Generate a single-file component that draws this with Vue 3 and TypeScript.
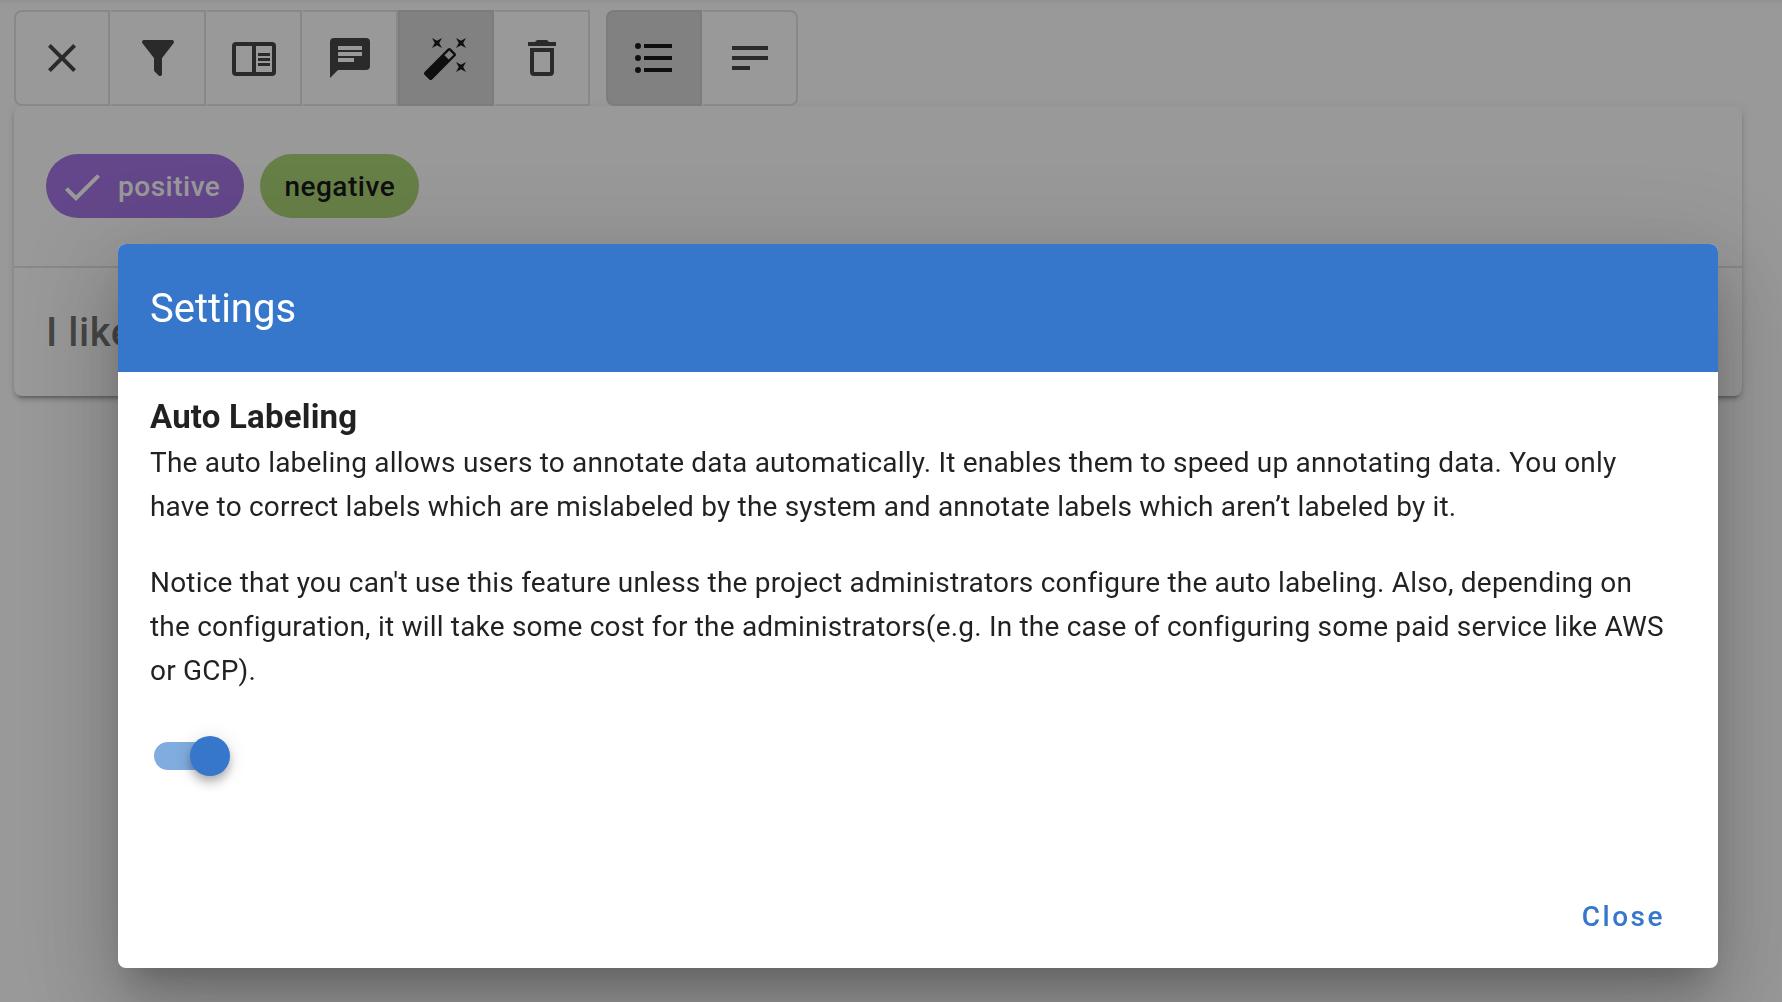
<script setup lang="ts">
import { ref } from 'vue'

interface Tool {
  name: string
  path: string
}

const tools: Tool[] = [
  {
    name: 'Clear labels',
    path: 'M19 6.41L17.59 5 12 10.59 6.41 5 5 6.41 10.59 12 5 17.59 6.41 19 12 13.41 17.59 19 19 17.59 13.41 12z',
  },
  {
    name: 'Filter',
    path: 'M14,12V19.88C14.04,20.18 13.94,20.5 13.71,20.71C13.32,21.1 12.69,21.1 12.3,20.71L10.29,18.7C10.06,18.47 9.96,18.16 10,17.87V12H9.97L4.21,4.62C3.87,4.19 3.95,3.56 4.38,3.22C4.57,3.08 4.78,3 5,3H19C19.22,3 19.43,3.08 19.62,3.22C20.05,3.56 20.13,4.19 19.79,4.62L14.03,12H14Z',
  },
  {
    name: 'Guideline',
    path: 'M21,4H3A2,2 0 0,0 1,6V19A2,2 0 0,0 3,21H21A2,2 0 0,0 23,19V6A2,2 0 0,0 21,4M3,19V6H11V19H3M21,19H13V6H21V19M14,9.5H20V11H14V9.5M14,12H20V13.5H14V12M14,14.5H20V16H14V14.5Z',
  },
  {
    name: 'Comments',
    path: 'M20,2H4A2,2 0 0,0 2,4V22L6,18H20A2,2 0 0,0 22,16V4A2,2 0 0,0 20,2M6,6H18V8H6V6M6,9H18V11H6V9M14,14H6V12H14V14Z',
  },
  {
    name: 'Auto labeling',
    path: 'M7.5,5.6L5,7L6.4,4.5L5,2L7.5,3.4L10,2L8.6,4.5L10,7L7.5,5.6M19.5,15.4L22,14L20.6,16.5L22,19L19.5,17.6L17,19L18.4,16.5L17,14L19.5,15.4M22,2L20.6,4.5L22,7L19.5,5.6L17,7L18.4,4.5L17,2L19.5,3.4L22,2M13.34,12.78L15.78,10.34L13.66,8.22L11.22,10.66L13.34,12.78M14.37,7.29L16.71,9.63C17.1,10 17.1,10.65 16.71,11.04L5.04,22.71C4.65,23.1 4,23.1 3.63,22.71L1.29,20.37C0.9,20 0.9,19.35 1.29,18.96L12.96,7.29C13.35,6.9 14,6.9 14.37,7.29Z',
  },
  {
    name: 'Delete',
    path: 'M6,19A2,2 0 0,0 8,21H16A2,2 0 0,0 18,19V7H6V19M8,9H16V19H8V9M15.5,4L14.5,3H9.5L8.5,4H5V6H19V4H15.5Z',
  },
]

const views: Tool[] = [
  {
    name: 'Label list',
    path: 'M7,5H21V7H7V5M7,13V11H21V13H7M4,4.5A1.5,1.5 0 0,1 5.5,6A1.5,1.5 0 0,1 4,7.5A1.5,1.5 0 0,1 2.5,6A1.5,1.5 0 0,1 4,4.5M4,10.5A1.5,1.5 0 0,1 5.5,12A1.5,1.5 0 0,1 4,13.5A1.5,1.5 0 0,1 2.5,12A1.5,1.5 0 0,1 4,10.5M7,19V17H21V19H7M4,16.5A1.5,1.5 0 0,1 5.5,18A1.5,1.5 0 0,1 4,19.5A1.5,1.5 0 0,1 2.5,18A1.5,1.5 0 0,1 4,16.5Z',
  },
  {
    name: 'Label text',
    path: 'M21,6V8H3V6H21M3,18H12V16H3V18M21,13V11H3V13H21Z',
  },
]

const activeTool = ref(4)
const activeView = ref(0)
const enabled = ref(true)
const open = ref(true)
</script>

<template>
  <div class="page">
    <div class="toolbar">
      <div class="group">
        <button
          v-for="(tool, i) in tools"
          :key="tool.name"
          type="button"
          class="tool"
          :class="{ active: i === activeTool }"
          :aria-label="tool.name"
        >
          <svg class="icon" viewBox="0 0 24 24"><path fill-rule="evenodd" :d="tool.path" /></svg>
        </button>
      </div>
      <div class="group rounded">
        <button
          v-for="(view, i) in views"
          :key="view.name"
          type="button"
          class="tool"
          :class="{ active: i === activeView }"
          :aria-label="view.name"
          @click="activeView = i"
        >
          <svg class="icon" viewBox="0 0 24 24"><path :d="view.path" /></svg>
        </button>
      </div>
    </div>

    <main class="card">
      <div class="labels">
        <button type="button" class="chip positive">
          <svg class="icon check" viewBox="0 0 24 24">
            <path d="M21,7L9,19L3.5,13.5L4.91,12.09L9,16.17L19.59,5.59L21,7Z" />
          </svg>
          positive
        </button>
        <button type="button" class="chip negative">negative</button>
      </div>
      <p class="sample">I like</p>
    </main>

    <div v-if="open" class="overlay">
      <section class="dialog" role="dialog" aria-modal="true" aria-labelledby="dialog-title">
        <header class="dialog-header">
          <h2 id="dialog-title">Settings</h2>
        </header>
        <div class="dialog-body">
          <h3 id="auto-title">Auto Labeling</h3>
          <p>
            The auto labeling allows users to annotate data automatically. It enables them to speed up
            annotating data. You only have to correct labels which are mislabeled by the system and
            annotate labels which aren’t labeled by it.
          </p>
          <p>
            Notice that you can't use this feature unless the project administrators configure the auto
            labeling. Also, depending on the configuration, it will take some cost for the
            administrators(e.g. In the case of configuring some paid service like AWS or GCP).
          </p>
          <input v-model="enabled" type="checkbox" role="switch" class="switch" aria-labelledby="auto-title" />
        </div>
        <footer class="dialog-actions">
          <button type="button" class="close" @click="open = false">Close</button>
        </footer>
      </section>
    </div>
  </div>
</template>

<style>
body {
  margin: 0;
  background: #fff;
}
</style>

<style scoped>
.page {
  box-sizing: border-box;
  min-height: 100vh;
  padding: 10px 40px 0 14px;
  box-shadow: inset 0 8px 8px -8px rgba(0, 0, 0, 0.12);
  font-family: Roboto, 'Liberation Sans', sans-serif;
  font-size: 28px;
  line-height: 44px;
  color: rgba(0, 0, 0, 0.87);
}

button {
  font: inherit;
  cursor: pointer;
}

.toolbar {
  display: flex;
  gap: 16px;
}

.group {
  display: flex;
}

.tool {
  box-sizing: border-box;
  display: flex;
  align-items: center;
  justify-content: center;
  width: 96px;
  height: 96px;
  padding: 0;
  border: 2px solid #e0e0e0;
  border-left-color: transparent;
  background: #fff;
  color: rgba(0, 0, 0, 0.8);
}

.tool:first-child {
  border-left-color: #e0e0e0;
  border-radius: 8px 0 0 8px;
}

.rounded .tool:last-child {
  border-radius: 0 8px 8px 0;
}

.tool.active {
  border-color: rgba(0, 0, 0, 0.04);
  background: #d2d2d2;
  color: #000;
}

.icon {
  width: 48px;
  height: 48px;
  fill: currentColor;
}

.card {
  border-radius: 8px;
  background: #fff;
  box-shadow:
    0 6px 2px -4px rgba(0, 0, 0, 0.2),
    0 4px 4px 0 rgba(0, 0, 0, 0.14),
    0 2px 10px 0 rgba(0, 0, 0, 0.12);
}

.labels {
  display: flex;
  gap: 16px;
  padding: 48px 32px;
  border-bottom: 2px solid #e0e0e0;
}

.chip {
  display: flex;
  align-items: center;
  height: 64px;
  padding: 1px 24px 0;
  border: 0;
  border-radius: 32px;
  font-weight: 500;
  letter-spacing: 0.018em;
}

.positive {
  background: #9c68e4;
  color: #fff;
}

.negative {
  background: #a3d168;
  color: #000;
}

.check {
  margin: 0 12px 0 -12px;
}

.sample {
  margin: 0;
  padding: 33px 32px 31px;
  font-size: 40px;
  font-weight: 500;
  line-height: 64px;
  letter-spacing: 0.0125em;
  color: rgba(0, 0, 0, 0.6);
}

.overlay {
  position: fixed;
  inset: 0;
  padding: 244px 64px 34px 118px;
  background: rgba(33, 33, 33, 0.46);
}

.dialog {
  overflow: hidden;
  border-radius: 8px;
  background: #fff;
  box-shadow:
    0 22px 30px -14px rgba(0, 0, 0, 0.2),
    0 48px 76px 6px rgba(0, 0, 0, 0.14),
    0 18px 92px 16px rgba(0, 0, 0, 0.12);
}

.dialog-header {
  padding: 33px 32px 31px;
  background: #3676cb;
  color: #fff;
}

.dialog-header h2 {
  margin: 0;
  font-size: 40px;
  font-weight: 400;
  line-height: 64px;
}

.dialog-body {
  padding: 24px 48px 0 32px;
  letter-spacing: 0.007em;
}

.dialog-body h3 {
  margin: 0 0 3px;
  font-size: 33px;
  font-weight: 700;
  line-height: 42px;
}

.dialog-body p {
  margin: 0 0 32px;
}

.switch {
  appearance: none;
  display: flex;
  align-items: center;
  width: 72px;
  height: 28px;
  margin: 49px 4px 0;
  border-radius: 14px;
  background: #9e9e9e;
  cursor: pointer;
}

.switch::before {
  content: '';
  flex: none;
  width: 40px;
  height: 40px;
  margin-left: -4px;
  border-radius: 50%;
  background: #fff;
  box-shadow:
    0 4px 8px -2px rgba(0, 0, 0, 0.2),
    0 8px 10px 0 rgba(0, 0, 0, 0.14),
    0 2px 20px 0 rgba(0, 0, 0, 0.12);
}

.switch:checked {
  background: #80acdf;
}

.switch:checked::before {
  margin-left: 36px;
  background: #3676cb;
}

.dialog-actions {
  display: flex;
  justify-content: flex-end;
  padding: 111px 21px 15px;
}

.close {
  height: 72px;
  padding: 0 32px;
  border: 0;
  background: none;
  color: #3676cb;
  font-weight: 500;
  letter-spacing: 0.09em;
}
</style>
